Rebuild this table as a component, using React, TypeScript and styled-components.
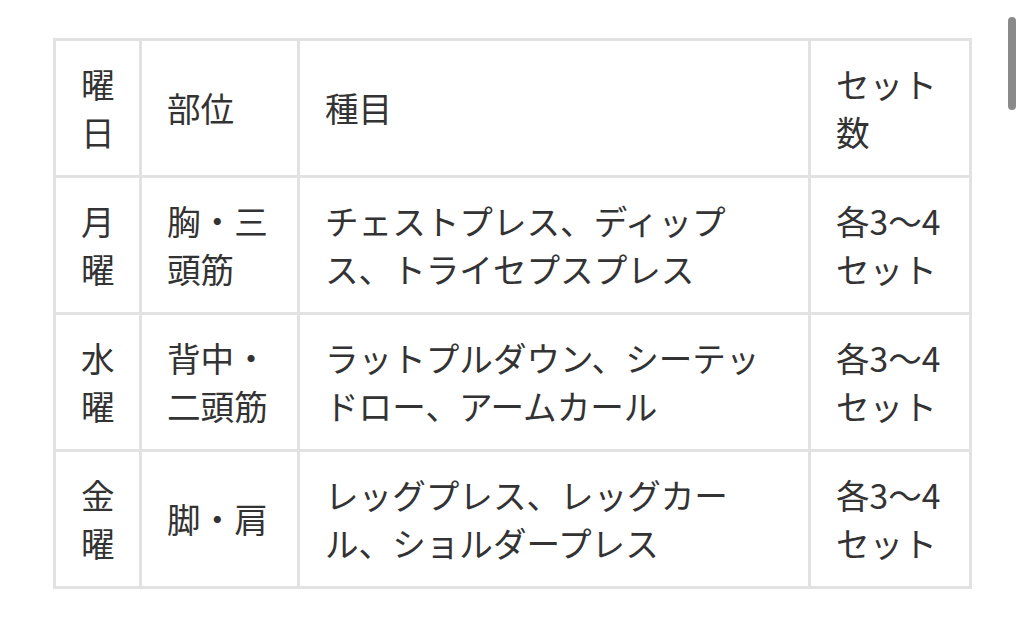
import styled, { createGlobalStyle } from "styled-components";

const GlobalStyle = createGlobalStyle`
  html, body {
    margin: 0;
    padding: 0;
    background: #ffffff;
    overflow: hidden;
  }
  body {
    font-family: "Noto Sans CJK JP", "Noto Sans", sans-serif;
    color: #333333;
  }
`;

const Page = styled.div`
  position: relative;
  width: 1024px;
  height: 641px;
  padding: 38px 0 0 53px;
  box-sizing: border-box;
`;

const Table = styled.table`
  border-collapse: collapse;
  table-layout: fixed;
  width: 919px;
  font-size: 33.6px;
  line-height: 48px;
  border: 3px solid #e2e2e2;
`;

const Cell = styled.td`
  border: 3px solid #e2e2e2;
  padding: 19px 18px 19px 25px;
  vertical-align: middle;
  text-align: left;
  font-weight: 400;
  word-break: normal;
  line-break: strict;
`;

const Scrollbar = styled.div`
  position: absolute;
  top: 17px;
  right: 8px;
  width: 8px;
  height: 93px;
  border-radius: 4px;
  background: #8a8a8a;
`;

type Row = { day: string; part: string; item: string; sets: string };

const rows: Row[] = [
  {
    day: "月曜",
    part: "胸・三頭筋",
    item: "チェストプレス、ディップス、トライセプスプレス",
    sets: "各3〜4セット",
  },
  {
    day: "水曜",
    part: "背中・二頭筋",
    item: "ラットプルダウン、シーテッドロー、アームカール",
    sets: "各3〜4セット",
  },
  {
    day: "金曜",
    part: "脚・肩",
    item: "レッグプレス、レッグカール、ショルダープレス",
    sets: "各3〜4セット",
  },
];

export default function App() {
  return (
    <>
      <GlobalStyle />
      <Page>
        <Table>
          <colgroup>
            <col style={{ width: 86 }} />
            <col style={{ width: 158 }} />
            <col style={{ width: 511 }} />
            <col style={{ width: 161 }} />
          </colgroup>
          <thead>
            <tr>
              <Cell as="th">曜日</Cell>
              <Cell as="th">部位</Cell>
              <Cell as="th">種目</Cell>
              <Cell as="th">セット数</Cell>
            </tr>
          </thead>
          <tbody>
            {rows.map((r) => (
              <tr key={r.day}>
                <Cell>{r.day}</Cell>
                <Cell>{r.part}</Cell>
                <Cell>{r.item}</Cell>
                <Cell>{r.sets}</Cell>
              </tr>
            ))}
          </tbody>
        </Table>
        <Scrollbar />
      </Page>
    </>
  );
}
